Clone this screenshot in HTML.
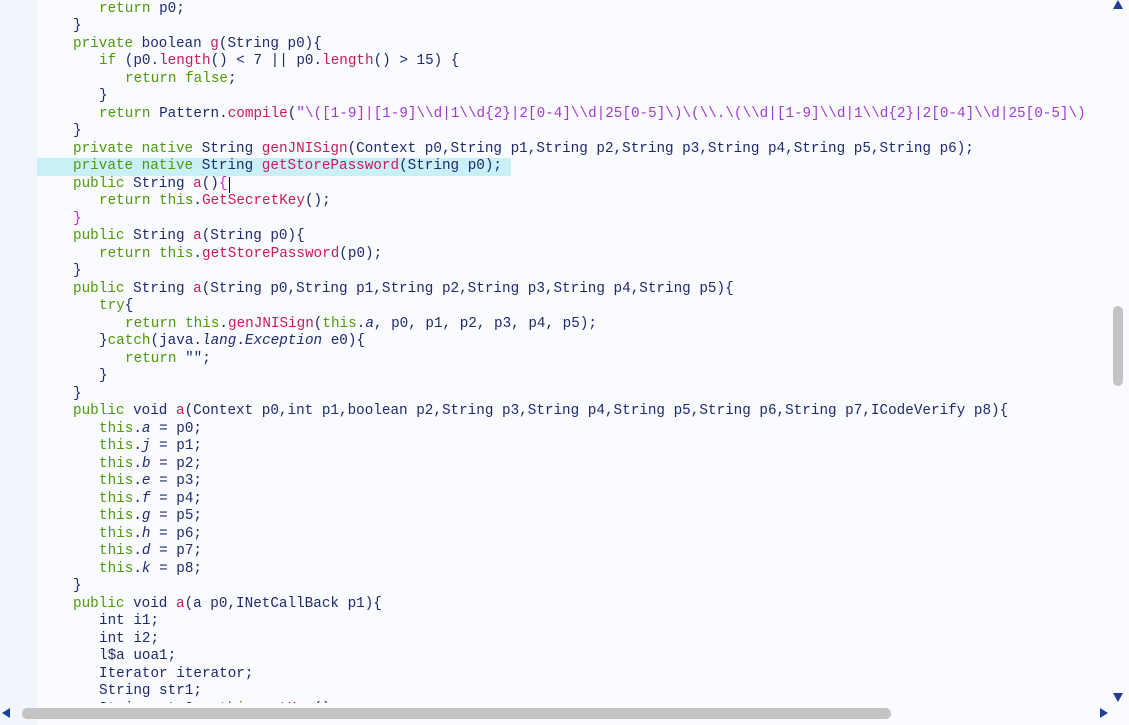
<!DOCTYPE html>
<html><head><meta charset="utf-8"><style>
html,body{margin:0;padding:0;}
body{width:1129px;height:725px;background:#f9fbfe;position:relative;overflow:hidden;font-family:"Liberation Mono",monospace;}
#gut{position:absolute;left:0;top:0;width:37px;height:725px;background:#f1f5fc;}
#code{position:absolute;left:0;top:1.5px;width:1108px;height:701px;overflow:hidden;}
.l{position:absolute;left:0;height:17.5px;line-height:17.5px;font-size:14.3px;color:#1f2a6e;white-space:pre;}
.k{color:#4e9a0a;}
.f{color:#c81a5e;}
.s{color:#a23ad2;}
.i{font-style:italic;}
.m{color:#e020e0;}
.hl{position:absolute;left:37px;top:158px;width:474px;height:17.5px;background:#c9eff7;}
.cur{position:absolute;left:229px;top:176.5px;width:1px;height:16px;background:#000;}
.vt{position:absolute;left:1113px;top:306px;width:10px;height:80px;background:#c4c4c4;border-radius:5px;}
.ht{position:absolute;left:22px;top:708px;width:869px;height:11px;background:#c4c4c4;border-radius:5px;}
.ar{position:absolute;width:0;height:0;}
</style></head><body>
<div id="gut"></div>
<div class="hl"></div>
<div id="code">
<div class="l" style="top:-1px;left:99px"><span class="k">return</span> p0;</div>
<div class="l" style="top:16.5px;left:73px">}</div>
<div class="l" style="top:34px;left:73px"><span class="k">private</span> boolean <span class="f">g</span>(String p0){</div>
<div class="l" style="top:51.5px;left:99px"><span class="k">if</span> (p0.<span class="f">length</span>() &lt; 7 || p0.<span class="f">length</span>() &gt; 15) {</div>
<div class="l" style="top:69px;left:125px"><span class="k">return</span> <span class="k">false</span>;</div>
<div class="l" style="top:86.5px;left:99px">}</div>
<div class="l" style="top:104px;left:99px"><span class="k">return</span> Pattern.<span class="f">compile</span>(<span class="s">"\([1-9]|[1-9]\\d|1\\d{2}|2[0-4]\\d|25[0-5]\)\(\\.\(\\d|[1-9]\\d|1\\d{2}|2[0-4]\\d|25[0-5]\)</span></div>
<div class="l" style="top:121.5px;left:73px">}</div>
<div class="l" style="top:139px;left:73px"><span class="k">private</span> <span class="k">native</span> String <span class="f">genJNISign</span>(Context p0,String p1,String p2,String p3,String p4,String p5,String p6);</div>
<div class="l" style="top:156.5px;left:73px"><span class="k">private</span> <span class="k">native</span> String <span class="f">getStorePassword</span>(String p0);</div>
<div class="l" style="top:174px;left:73px"><span class="k">public</span> String <span class="f">a</span>()<span class="m">{</span></div>
<div class="l" style="top:191.5px;left:99px"><span class="k">return</span> <span class="k">this</span>.<span class="f">GetSecretKey</span>();</div>
<div class="l" style="top:209px;left:73px"><span class="m">}</span></div>
<div class="l" style="top:226.5px;left:73px"><span class="k">public</span> String <span class="f">a</span>(String p0){</div>
<div class="l" style="top:244px;left:99px"><span class="k">return</span> <span class="k">this</span>.<span class="f">getStorePassword</span>(p0);</div>
<div class="l" style="top:261.5px;left:73px">}</div>
<div class="l" style="top:279px;left:73px"><span class="k">public</span> String <span class="f">a</span>(String p0,String p1,String p2,String p3,String p4,String p5){</div>
<div class="l" style="top:296.5px;left:99px"><span class="k">try</span>{</div>
<div class="l" style="top:314px;left:125px"><span class="k">return</span> <span class="k">this</span>.<span class="f">genJNISign</span>(<span class="k">this</span>.<span class="i">a</span>, p0, p1, p2, p3, p4, p5);</div>
<div class="l" style="top:331.5px;left:99px">}<span class="k">catch</span>(java.<span class="i">lang</span>.<span class="i">Exception</span> e0){</div>
<div class="l" style="top:349px;left:125px"><span class="k">return</span> "";</div>
<div class="l" style="top:366.5px;left:99px">}</div>
<div class="l" style="top:384px;left:73px">}</div>
<div class="l" style="top:401.5px;left:73px"><span class="k">public</span> void <span class="f">a</span>(Context p0,int p1,boolean p2,String p3,String p4,String p5,String p6,String p7,ICodeVerify p8){</div>
<div class="l" style="top:419px;left:99px"><span class="k">this</span>.<span class="i">a</span> = p0;</div>
<div class="l" style="top:436.5px;left:99px"><span class="k">this</span>.<span class="i">j</span> = p1;</div>
<div class="l" style="top:454px;left:99px"><span class="k">this</span>.<span class="i">b</span> = p2;</div>
<div class="l" style="top:471.5px;left:99px"><span class="k">this</span>.<span class="i">e</span> = p3;</div>
<div class="l" style="top:489px;left:99px"><span class="k">this</span>.<span class="i">f</span> = p4;</div>
<div class="l" style="top:506.5px;left:99px"><span class="k">this</span>.<span class="i">g</span> = p5;</div>
<div class="l" style="top:524px;left:99px"><span class="k">this</span>.<span class="i">h</span> = p6;</div>
<div class="l" style="top:541.5px;left:99px"><span class="k">this</span>.<span class="i">d</span> = p7;</div>
<div class="l" style="top:559px;left:99px"><span class="k">this</span>.<span class="i">k</span> = p8;</div>
<div class="l" style="top:576.5px;left:73px">}</div>
<div class="l" style="top:594px;left:73px"><span class="k">public</span> void <span class="f">a</span>(a p0,INetCallBack p1){</div>
<div class="l" style="top:611.5px;left:99px">int i1;</div>
<div class="l" style="top:629px;left:99px">int i2;</div>
<div class="l" style="top:646.5px;left:99px">l$a uoa1;</div>
<div class="l" style="top:664px;left:99px">Iterator iterator;</div>
<div class="l" style="top:681.5px;left:99px">String str1;</div>
<div class="l" style="top:699px;left:99px">String str2 = <span class="k">this</span>.<span class="f">getKey</span>();</div>
</div>
<div class="cur"></div>
<div class="vt"></div>
<div class="ht"></div>
<div class="ar" style="left:1113px;top:0px;border-left:5px solid transparent;border-right:5px solid transparent;border-bottom:9px solid #1d3f9a;"></div>
<div class="ar" style="left:1113px;top:693px;border-left:5px solid transparent;border-right:5px solid transparent;border-top:9px solid #1d3f9a;"></div>
<div class="ar" style="left:2px;top:708px;border-top:5px solid transparent;border-bottom:5px solid transparent;border-right:8px solid #1d3f9a;"></div>
<div class="ar" style="left:1100px;top:708px;border-top:5px solid transparent;border-bottom:5px solid transparent;border-left:8px solid #1d3f9a;"></div>
</body></html>
